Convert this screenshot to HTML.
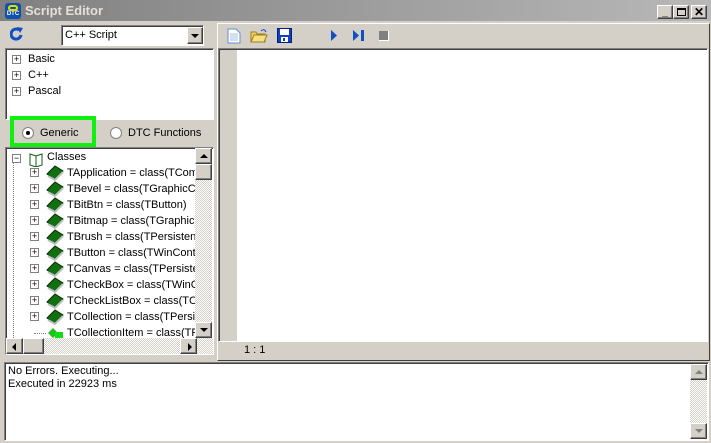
<!DOCTYPE html>
<html><head><style>
*{margin:0;padding:0;box-sizing:border-box}
body{width:711px;height:443px;background:#d4d0c8;font-family:"Liberation Sans",Tahoma,sans-serif;font-size:11px;position:relative;overflow:hidden;color:#000}
.a{position:absolute}
.sunk{border:1px solid;border-color:#808080 #fff #fff #808080;box-shadow:inset 1px 1px 0 #404040}
.btn{background:#d4d0c8;border:1px solid;border-color:#fff #404040 #404040 #fff;box-shadow:inset -1px -1px 0 #808080}
.pm{position:absolute;width:9px;height:9px;border:1px solid #808080;background:#fff;font-size:9px;line-height:7px;text-align:center;color:#000}
.chk{background:repeating-conic-gradient(#d4d0c8 0 25%,#fff 0 50%) 0 0/2px 2px}
.z{z-index:5}
</style></head><body>
<div class="a" style="left:0;top:0;width:711px;height:22px;background:linear-gradient(90deg,#808080,#b8b8b8);border-bottom:1px solid #d4d0c8"></div>
<div class="a" style="left:5px;top:3px;width:16px;height:16px;background:#1050b0;border-radius:3px;color:#fff;font-size:6px;text-align:center;line-height:22px;font-weight:bold">DTC<div class="a" style="left:3px;top:2px;width:10px;height:6px;border:2px solid #e0e000;border-radius:5px"></div></div>
<div class="a" style="left:25px;top:3px;color:#e4e0d8;font-weight:bold;font-size:13px">Script Editor</div>
<div class="a btn" style="left:657px;top:5px;width:16px;height:14px;font-size:10px;text-align:center;line-height:14px;font-weight:bold">_</div>
<div class="a btn" style="left:673px;top:5px;width:16px;height:14px"><div class="a" style="left:3px;top:2px;width:9px;height:8px;border:1px solid #000;border-top-width:2px"></div></div>
<div class="a btn" style="left:691px;top:5px;width:16px;height:14px;font-size:12px;text-align:center;line-height:12px;font-weight:bold">✕</div>
<svg class="a" style="left:10px;top:27px" width="14" height="14" viewBox="0 0 14 14"><path d="M11 8a5 5 0 1 1-2-5" fill="none" stroke="#1050c0" stroke-width="3"/><path d="M7 0l6 1-3 5z" fill="#1050c0"/></svg>
<div class="a sunk" style="left:61px;top:25px;width:143px;height:21px;background:#fff"><div class="a" style="left:3px;top:3px;font-size:11px">C++ Script</div>
<div class="a btn" style="left:125px;top:1px;width:16px;height:17px"><div class="a" style="left:3px;top:6px;border:4px solid transparent;border-top:4px solid #000;border-bottom:0"></div></div></div>
<div class="a sunk" style="left:5px;top:48px;width:209px;height:72px;background:#fff">
<div class="pm" style="left:6px;top:6px">+</div><div class="a" style="left:22px;top:4px">Basic</div>
<div class="pm" style="left:6px;top:22px">+</div><div class="a" style="left:22px;top:20px">C++</div>
<div class="pm" style="left:6px;top:38px">+</div><div class="a" style="left:22px;top:36px">Pascal</div>
</div>
<div class="a" style="left:10px;top:116px;width:86px;height:31px;border:4px solid #10f010"></div>
<div class="a" style="left:22px;top:127px;width:12px;height:12px;border-radius:50%;background:#fff;border:1px solid #808080"><div class="a" style="left:3px;top:3px;width:4px;height:4px;border-radius:50%;background:#000"></div></div>
<div class="a" style="left:40px;top:127px">Generic</div>
<div class="a" style="left:110px;top:127px;width:12px;height:12px;border-radius:50%;background:#fff;border:1px solid #808080"></div>
<div class="a" style="left:128px;top:127px">DTC Functions</div>
<div class="a sunk" style="left:5px;top:147px;width:209px;height:208px;background:#fff;overflow:hidden">
<div class="a" style="left:0;top:0;width:189px;height:190px;overflow:hidden">
<div class="a" style="left:7px;top:14px;height:190px;border-left:1px dotted #808080"></div>
<div class="pm" style="left:6px;top:6px;line-height:6px">−</div>
<svg class="a" style="left:22px;top:3px" width="16" height="16"><path d="M2 3l6 2 6-2v11l-6 2-6-2z" fill="#fff" stroke="#106010"/><path d="M8 5v11" stroke="#106010"/></svg>
<div class="a" style="left:41px;top:3px">Classes</div>
<div id="rows"></div>
</div>
</div>
<div class="a chk z" style="left:195px;top:148px;width:17px;height:190px"></div>
<div class="a btn z" style="left:195px;top:148px;width:17px;height:16px"><div class="a" style="left:4px;top:5px;border:4px solid transparent;border-bottom:4px solid #000;border-top:0"></div></div>
<div class="a btn z" style="left:195px;top:164px;width:17px;height:16px"></div>
<div class="a btn z" style="left:195px;top:322px;width:17px;height:16px"><div class="a" style="left:4px;top:5px;border:4px solid transparent;border-top:4px solid #000;border-bottom:0"></div></div>
<div class="a chk z" style="left:6px;top:338px;width:207px;height:16px"></div>
<div class="a btn z" style="left:6px;top:338px;width:17px;height:16px"><div class="a" style="left:5px;top:4px;border:4px solid transparent;border-right:4px solid #000;border-left:0"></div></div>
<div class="a btn z" style="left:23px;top:338px;width:21px;height:16px"></div>
<div class="a btn z" style="left:180px;top:338px;width:17px;height:16px"><div class="a" style="left:7px;top:4px;border:4px solid transparent;border-left:4px solid #000;border-right:0"></div></div>
<div class="a" style="left:217px;top:23px;width:493px;height:338px;border:1px solid;border-color:#fff #404040 #404040 #fff"></div>
<svg class="a" style="left:227px;top:28px" width="14" height="16"><path d="M1 1h8l4 4v10H1z" fill="#fff" stroke="#6090d0"/><path d="M3 6h8M3 8h8M3 10h8M3 12h8" stroke="#a0c0e0"/></svg>
<svg class="a" style="left:250px;top:27px" width="18" height="16"><path d="M1 5h5l1 2h8v8H1z" fill="#f0d060" stroke="#a08020"/><path d="M1 15l3-7h13l-3 7z" fill="#f8e080" stroke="#a08020"/><path d="M11 4q3-3 5 1" fill="none" stroke="#1050c0"/></svg>
<svg class="a" style="left:277px;top:28px" width="15" height="15"><rect x="0.5" y="0.5" width="14" height="14" fill="#1040c0" stroke="#002080"/><rect x="3" y="1" width="9" height="6" fill="#fff"/><rect x="4" y="9" width="7" height="5" fill="#fff"/><rect x="6" y="10" width="2" height="3" fill="#1040c0"/></svg>
<svg class="a" style="left:330px;top:30px" width="8" height="11"><path d="M1 0l6 5.5L1 11z" fill="#1050c0"/></svg>
<svg class="a" style="left:352px;top:30px" width="13" height="11"><path d="M1 0l6 5.5L1 11z" fill="#1050c0"/><rect x="9" y="0" width="3" height="11" fill="#1050c0"/></svg>
<div class="a" style="left:379px;top:31px;width:10px;height:10px;background:#808080;border-right:1px solid #fff;border-bottom:1px solid #fff"></div>
<div class="a sunk" style="left:218px;top:48px;width:490px;height:294px;background:#fff"><div class="a" style="left:1px;top:1px;width:17px;height:291px;background:#d4d0c8"></div></div>
<div class="a" style="left:244px;top:344px">1 : 1</div>
<div class="a sunk" style="left:4px;top:362px;width:705px;height:79px;background:#fff">
<div class="a" style="left:3px;top:2px;line-height:13px">No Errors. Executing...<br>Executed in 22923 ms</div>
<div class="a chk" style="left:685px;top:1px;width:17px;height:75px"></div>
<div class="a btn" style="left:685px;top:1px;width:17px;height:16px"><div class="a" style="left:4px;top:5px;border:4px solid transparent;border-bottom:4px solid #808080;border-top:0"></div></div>
<div class="a btn" style="left:685px;top:60px;width:17px;height:16px"><div class="a" style="left:4px;top:5px;border:4px solid transparent;border-top:4px solid #808080;border-bottom:0"></div></div>
</div>
<script>
var n=["TApplication = class(TComponent)","TBevel = class(TGraphicControl)","TBitBtn = class(TButton)","TBitmap = class(TGraphic)","TBrush = class(TPersistent)","TButton = class(TWinControl)","TCanvas = class(TPersistent)","TCheckBox = class(TWinControl)","TCheckListBox = class(TCustomListBox)","TCollection = class(TPersistent)","TCollectionItem = class(TPersistent)"];
var h="";n.forEach(function(t,i){var y=17+i*16;
h+=(i<10?'<div class="pm" style="left:24px;top:'+(y+3)+'px">+</div>':'<div class="a" style="left:28px;top:'+(y+8)+'px;width:12px;border-top:1px dotted #808080"></div>');
h+=(i<10?'<svg class="a" style="left:40px;top:'+y+'px" width="18" height="16"><path d="M1 9l8-8 8 5-8 9z" fill="#107010" stroke="#003000"/><path d="M2 11l7 4 8-8" fill="none" stroke="#c0c0c0" stroke-width="2"/></svg>':'<svg class="a" style="left:40px;top:'+y+'px" width="18" height="16"><path d="M2 8l5-5 5 5-5 5z" fill="#20c020"/><rect x="9" y="7" width="8" height="7" fill="#10e010"/></svg>');
h+='<div class="a" style="left:61px;top:'+(y+2)+'px;white-space:nowrap;font-size:11px">'+t+'</div>';});
document.getElementById("rows").innerHTML=h;
</script>
</body></html>
